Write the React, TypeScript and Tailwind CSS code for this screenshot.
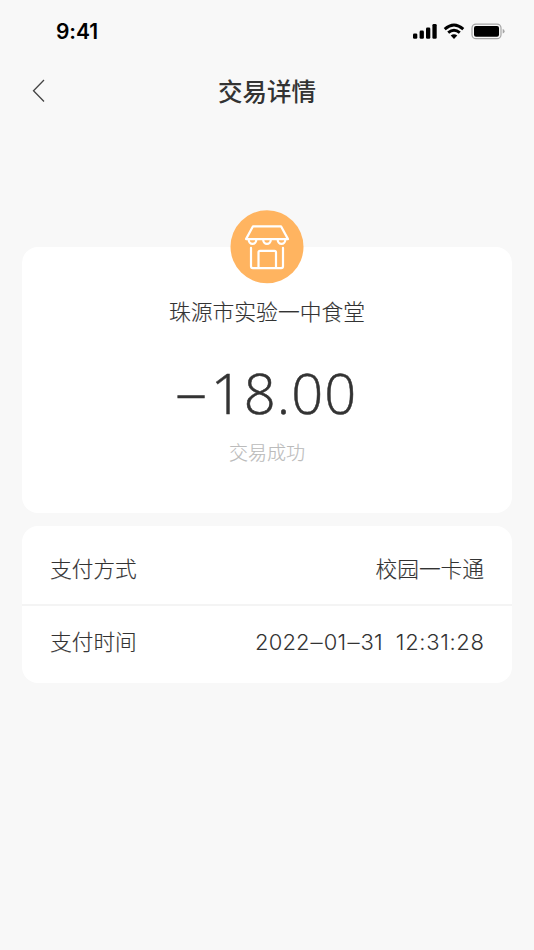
import React from "react";

function StatusBar() {
  return (
    <header className="flex h-[62px] items-center justify-between pl-[56px] pr-[29px] text-black">
      <time className="pt-[2px] font-['Inter',sans-serif] text-[21px] font-semibold leading-[62px] tracking-[-0.1px]">9:41</time>
      <svg className="mt-[2px]" width="92" height="20" viewBox="413 22.4 92 20" fill="currentColor">
        <rect x="413" y="33.8" width="4.3" height="5.4" rx="1.3" />
        <rect x="419.6" y="31" width="4.3" height="8.2" rx="1.3" />
        <rect x="426" y="28" width="4.3" height="11.2" rx="1.3" />
        <rect x="432.4" y="24.4" width="4.3" height="14.8" rx="1.3" />
        <g fill="none" stroke="currentColor" strokeWidth="2.9">
          <path d="M444.7 29.5 Q454 21.3 463.3 29.5" />
          <path d="M448.2 33.1 Q454 28.2 459.8 33.1" />
        </g>
        <path d="M450.7 36 Q454 33.1 457.3 36 L454 39.3Z" />
        <rect x="472" y="24.5" width="29" height="14.6" rx="4" fill="none" stroke="#a5a5a5" strokeWidth="1.2" />
        <rect x="474" y="26.5" width="25" height="10.6" rx="2" />
        <path d="M502.7 29.4 Q504.6 30 504.6 31.7 Q504.6 33.4 502.7 34Z" fill="#a5a5a5" />
      </svg>
    </header>
  );
}

function StoreIcon() {
  return (
    <svg className="absolute left-1/2 top-[-37px] -translate-x-1/2" width="74" height="74" viewBox="230 209.7 74 74" fill="none">
      <circle cx="267" cy="246.5" r="36.5" fill="#ffb460" />
      <g stroke="white" strokeWidth="2.2" strokeLinecap="round" strokeLinejoin="round">
        <path d="M253 226H281L288 238.8H246Z" />
        <path d="M248.7 239.5a3.8 4 0 0 0 7.6 0M263.2 239.5a3.8 4 0 0 0 7.6 0M277.7 239.5a3.8 4 0 0 0 7.6 0" />
        <path d="M251 247.5V266Q251 267.8 252.8 267.8H281.2Q283 267.8 283 266V247.5M258.5 267.5V252Q258.5 250.5 260 250.5H274.5Q276 250.5 276 252V267.5" />
      </g>
    </svg>
  );
}

function DateDash() {
  return <span className="mx-[1.5px] inline-block scale-x-110">–</span>;
}

export default function App() {
  return (
    <main className="h-[950px] w-full overflow-hidden bg-[#f8f8f8] font-['Noto_Sans_CJK_SC',sans-serif] text-[#333]">
      <StatusBar />
      <nav className="grid h-[58px] grid-cols-[1fr_auto_1fr] items-center">
        <svg className="ml-[31px]" width="16" height="24" viewBox="31 79 16 24" fill="none" stroke="#444" strokeWidth="1.3">
          <path d="M44 80L33.5 90.7L44 101.5" />
        </svg>
        <h1 className="text-[24.5px] font-medium leading-[58px]">交易详情</h1>
      </nav>
      <section className="relative mx-[22px] mt-[126.5px] flex h-[266px] flex-col items-center rounded-[16px] bg-white">
        <StoreIcon />
        <h2 className="mt-[48.5px] text-[21.8px] font-light leading-8 [-webkit-text-stroke:0.15px_#333]">珠源市实验一中食堂</h2>
        <div className="mt-[32px] flex h-[66px] items-center font-['Open_Sans',sans-serif] text-[56px] font-light leading-[66px] [-webkit-text-stroke:0.5px_#333]">
          <span className="mr-[6px] -translate-y-[2px] scale-x-[1.13]">–</span>
          <span className="tracking-[1.1px]">18.00</span>
        </div>
        <p className="mt-[12.5px] text-[19px] font-light leading-7 text-[#bbb] [-webkit-text-stroke:0.15px_#bbb]">交易成功</p>
      </section>
      <section className="mx-[22px] mt-[13.5px] h-[157px] rounded-[16px] bg-white text-[21.7px] font-light text-[#333] [-webkit-text-stroke:0.15px_#333]">
        <div className="flex h-[80px] items-center justify-between border-b-2 border-[#f4f4f4] px-[28px] pt-[7px]">
          <span>支付方式</span>
          <span>校园一卡通</span>
        </div>
        <div className="flex h-[71px] items-center justify-between px-[28px]">
          <span>支付时间</span>
          <time className="flex gap-[13px] pt-[1px] font-['Inter',sans-serif] text-[22px] [-webkit-text-stroke:0px]">
            <span className="tracking-[0.15px]">2022<DateDash />01<DateDash />31</span>
            <span className="-mr-[0.6px] tracking-[0.65px]">12:31:28</span>
          </time>
        </div>
      </section>
    </main>
  );
}
